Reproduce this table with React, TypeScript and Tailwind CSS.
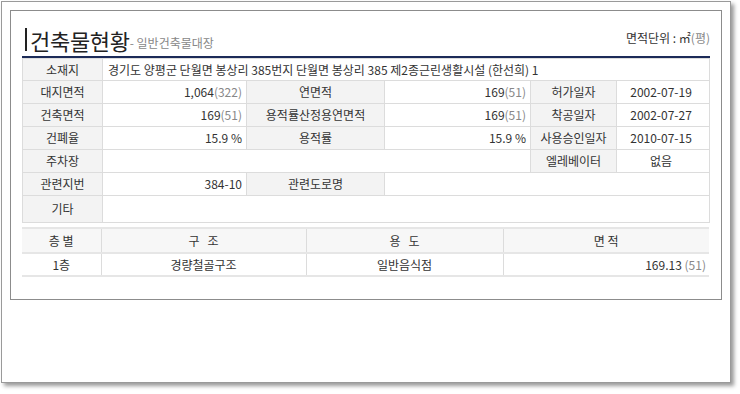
const font = { fontFamily: '"Noto Sans CJK KR", "Noto Sans", sans-serif' }

const lbl = 'bg-[#f3f3f3] text-center text-[#333] border border-[#dcdcdc] px-1'
const val = 'bg-white text-right text-[#333] border border-[#dcdcdc] pr-[4px]'

function Num({ n, p }: { n: string; p: string }) {
  return (
    <>
      {n}
      <span className="text-[#888]">({p})</span>
    </>
  )
}

const floors = [{ floor: '1층', struct: '경량철골구조', use: '일반음식점', area: '169.13', py: '51' }]

export default function App() {
  return (
    <div className="w-[740px] h-[394px] bg-white pt-[1px] pl-[1px]" style={font}>
      <div className="w-[730px] h-[382px] border border-[#9a9a9a] bg-white shadow-[3px_3px_4px_rgba(0,0,0,0.4)] pt-[8px] pl-[8px]">
        <div className="w-[712px] h-[290px] border border-[#8c8c8c] pl-[11px] pr-[10px]">
          {/* header */}
          <div className="h-[45px] flex items-end justify-between pb-[3px]">
            <div className="flex items-end">
              <span className="w-[2px] h-[23px] bg-[#222] mb-[2px] ml-[3px] mr-[3px]" />
              <span className="text-[22px] leading-[26px] text-[#222] tracking-[-0.3px]">건축물현황</span>
              <span className="text-[12px] leading-[14px] text-[#888] mb-[3px]">- 일반건축물대장</span>
            </div>
            <div className="text-[12px] leading-[14px] text-[#333] mb-[8px] mr-[1px]">
              면적단위 : ㎡<span className="text-[#888]">(평)</span>
            </div>
          </div>
          <div className="w-[688px] h-[2px] bg-[#1c2b58]" />

          <table className="w-[687px] border-collapse table-fixed text-[12px] leading-[14px]">
            <colgroup>
              <col className="w-[80px]" />
              <col className="w-[144px]" />
              <col className="w-[138px]" />
              <col className="w-[146px]" />
              <col className="w-[86px]" />
              <col className="w-[93px]" />
            </colgroup>
            <tbody>
              <tr className="h-[22px]">
                <td className={lbl}>소재지</td>
                <td colSpan={5} className={`${val} !text-left pl-[5px]`}>
                  경기도 양평군 단월면 봉상리 385번지 단월면 봉상리 385 제2종근린생활시설 (한선희) 1
                </td>
              </tr>
              <tr className="h-[23px]">
                <td className={lbl}>대지면적</td>
                <td className={val}><Num n="1,064" p="322" /></td>
                <td className={lbl}>연면적</td>
                <td className={val}><Num n="169" p="51" /></td>
                <td className={lbl}>허가일자</td>
                <td className={`${val} !text-center`}>2002-07-19</td>
              </tr>
              <tr className="h-[23px]">
                <td className={lbl}>건축면적</td>
                <td className={val}><Num n="169" p="51" /></td>
                <td className={lbl}>용적률산정용연면적</td>
                <td className={val}><Num n="169" p="51" /></td>
                <td className={lbl}>착공일자</td>
                <td className={`${val} !text-center`}>2002-07-27</td>
              </tr>
              <tr className="h-[23px]">
                <td className={lbl}>건폐율</td>
                <td className={val}>15.9 %</td>
                <td className={lbl}>용적률</td>
                <td className={val}>15.9 %</td>
                <td className={lbl}>사용승인일자</td>
                <td className={`${val} !text-center`}>2010-07-15</td>
              </tr>
              <tr className="h-[23px]">
                <td className={lbl}>주차장</td>
                <td colSpan={3} className={val}></td>
                <td className={lbl}>엘레베이터</td>
                <td className={`${val} !text-center`}>없음</td>
              </tr>
              <tr className="h-[23px]">
                <td className={lbl}>관련지번</td>
                <td className={val}>384-10</td>
                <td className={lbl}>관련도로명</td>
                <td colSpan={3} className={val}></td>
              </tr>
              <tr className="h-[27px]">
                <td className={lbl}>기타</td>
                <td colSpan={5} className={val}></td>
              </tr>
            </tbody>
          </table>

          <table className="w-[687px] mt-[4px] border-collapse table-fixed text-[12px] leading-[14px] border-y-2 border-[#e6e6e6]">
            <colgroup>
              <col className="w-[79px]" />
              <col className="w-[205px]" />
              <col className="w-[197px]" />
              <col className="w-[206px]" />
            </colgroup>
            <thead>
              <tr className="h-[25px] bg-[#f7f7f7] border-b-2 border-[#e6e6e6]">
                <th className="font-normal text-[#333] border-r border-[#dcdcdc]">층 별</th>
                <th className="font-normal text-[#333] border-r border-[#dcdcdc]">구&nbsp;&nbsp;&nbsp;조</th>
                <th className="font-normal text-[#333] border-r border-[#dcdcdc]">용&nbsp;&nbsp;&nbsp;도</th>
                <th className="font-normal text-[#333]">면 적</th>
              </tr>
            </thead>
            <tbody>
              {floors.map(f => (
                <tr key={f.floor} className="h-[23px] bg-white">
                  <td className="text-center text-[#333] border-r border-[#dcdcdc]">{f.floor}</td>
                  <td className="text-center text-[#333] border-r border-[#dcdcdc]">{f.struct}</td>
                  <td className="text-center text-[#333] border-r border-[#dcdcdc]">{f.use}</td>
                  <td className="text-right text-[#333] pr-[3px]">
                    {f.area} <span className="text-[#888]">({f.py})</span>
                  </td>
                </tr>
              ))}
            </tbody>
          </table>
        </div>
      </div>
    </div>
  )
}
